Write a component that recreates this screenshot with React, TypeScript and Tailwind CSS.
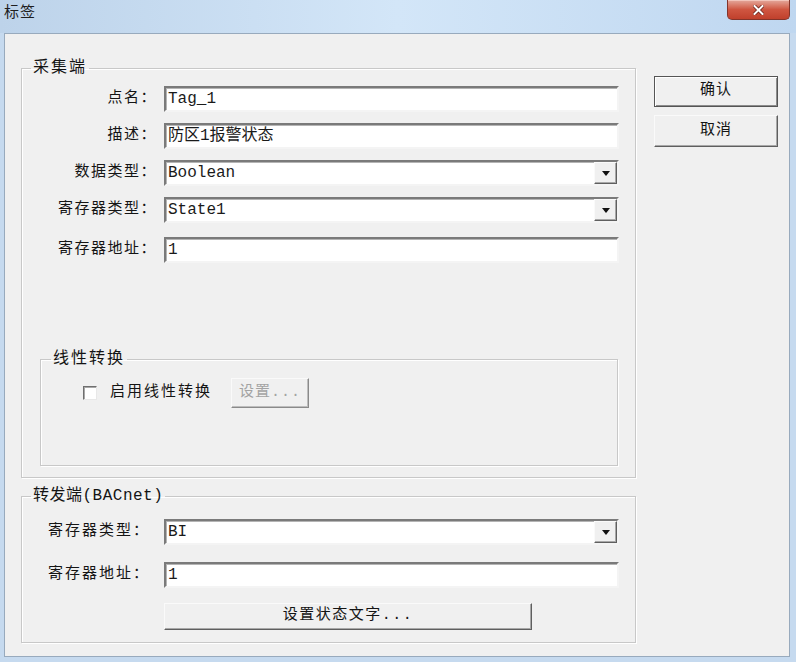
import React from 'react';

const FONT = "font-['Liberation_Mono','Noto_Sans_CJK_SC',monospace]";

// sunken edit box, classic win32 look
function Field({ value }: { value: string }) {
  return (
    <div className="w-[455px] h-[26px] flex items-center bg-white border-2 border-t-[#7a7a7a] border-l-[#7a7a7a] border-r-[#f4f4f4] border-b-[#f4f4f4] shadow-[inset_1px_1px_0_#b4b4b4]">
      <span className="pl-[2px] text-[16px] leading-none text-[#1a1a1a] whitespace-pre">{value}</span>
    </div>
  );
}

function Combo({ value }: { value: string }) {
  return (
    <div className="w-[455px] h-[26px] flex items-stretch bg-white border-2 border-t-[#7a7a7a] border-l-[#7a7a7a] border-r-[#f4f4f4] border-b-[#f4f4f4] shadow-[inset_1px_1px_0_#b4b4b4]">
      <span className="flex-1 flex items-center pl-[2px] text-[16px] leading-none text-[#1a1a1a]">{value}</span>
      <span className="w-[23px] flex items-center justify-center bg-[#f0f0f0] border border-t-[#fafafa] border-l-[#fafafa] border-r-[#5f5f5f] border-b-[#5f5f5f] shadow-[inset_-1px_-1px_0_#a8a8a8]">
        <svg width="8" height="5" viewBox="0 0 8 5">
          <path d="M0 0 L8 0 L4 5 Z" fill="#111" />
        </svg>
      </span>
    </div>
  );
}

function Row({ label, children, right = true }: { label: string; children: React.ReactNode; right?: boolean }) {
  return (
    <div className="flex items-center h-[26px]">
      <span
        className={
          right
            ? 'w-[135px] mr-[7px] text-right text-[15px] tracking-[1.5px] text-[#141414]'
            : 'w-[142px] pl-[26px] text-left text-[15px] tracking-[2px] text-[#141414]'
        }
      >
        {label}
      </span>
      {children}
    </div>
  );
}

export default function App() {
  return (
    <div className={`w-[796px] h-[662px] flex flex-col bg-[#c6daef] ${FONT}`}>
      {/* Title bar */}
      <div className="h-[33px] flex items-start justify-between bg-gradient-to-r from-[#bdd3ea] via-[#d3e6f8] to-[#bfd7f0]">
        <span className="pl-[4px] pt-[5px] text-[15px] leading-[18px] text-[#1e1e1e] tracking-[1px]">标签</span>
        <div className="mr-[6px] w-[63px] h-[20px] flex items-center justify-center rounded-b-[5px] border border-t-0 border-[#83342a] bg-gradient-to-b from-[#e3a89c] via-[#cf5641] to-[#c0402c] shadow-[inset_0_1px_0_#f2c5bb]">
          <svg width="11" height="10" viewBox="0 0 11 10">
            <path d="M1.5 1 L9.5 9 M9.5 1 L1.5 9" stroke="#6b2219" strokeWidth="3.6" strokeLinecap="square" />
            <path d="M1.5 1 L9.5 9 M9.5 1 L1.5 9" stroke="#ffffff" strokeWidth="2" strokeLinecap="square" />
          </svg>
        </div>
      </div>

      {/* Client area */}
      <div className="flex-1 ml-[4px] mr-[6px] mb-[5px] flex bg-[#f0f0f0] border border-[#98aabd] pl-[16px]">
        <div className="w-[615px] mt-[26px] flex flex-col">
          {/* 采集端 */}
          <fieldset className="border border-[#c8c8c8] shadow-[inset_1px_1px_0_#fff,1px_1px_0_#fff] px-0 pt-[10px] pb-[11px]">
            <legend className="ml-[9px] px-[2px] text-[16px] leading-[16px] tracking-[2px] text-[#141414]">采集端</legend>
            <div className="flex flex-col gap-[11px]">
              <Row label="点名：">
                <Field value="Tag_1" />
              </Row>
              <Row label="描述：">
                <Field value="防区1报警状态" />
              </Row>
              <Row label="数据类型：">
                <Combo value="Boolean" />
              </Row>
              <Row label="寄存器类型：">
                <Combo value="State1" />
              </Row>
              <div className="mt-[3px]">
                <Row label="寄存器地址：">
                  <Field value="1" />
                </Row>
              </div>
            </div>

            {/* 线性转换 */}
            <fieldset className="mt-[88px] ml-[18px] mr-[17px] border border-[#c8c8c8] shadow-[inset_1px_1px_0_#fff,1px_1px_0_#fff] px-0 pt-[11px] pb-[57px]">
              <legend className="ml-[10px] px-[2px] text-[16px] leading-[16px] tracking-[2px] text-[#141414]">线性转换</legend>
              <div className="flex items-center h-[30px] pl-[42px]">
                <span className="w-[14px] h-[14px] bg-white border border-t-[#6f6f6f] border-l-[#6f6f6f] border-r-[#e8e8e8] border-b-[#e8e8e8] shadow-[inset_1px_1px_0_#a8a8a8]" />
                <span className="ml-[13px] text-[15px] tracking-[2px] text-[#141414]">启用线性转换</span>
                <button className="ml-[19px] w-[78px] h-[30px] flex items-center justify-center bg-[#f0f0f0] border border-t-[#fafafa] border-l-[#fafafa] border-r-[#8a8a8a] border-b-[#8a8a8a] shadow-[inset_-1px_-1px_0_#bdbdbd] text-[15px] tracking-[1px] text-[#a3a3a3]">
                  设置...
                </button>
              </div>
            </fieldset>
          </fieldset>

          {/* 转发端 */}
          <fieldset className="mt-[10px] border border-[#c8c8c8] shadow-[inset_1px_1px_0_#fff,1px_1px_0_#fff] px-0 pt-[15px] pb-[12px]">
            <legend className="ml-[9px] px-[2px] text-[16px] leading-[16px] tracking-[0.5px] text-[#141414]">转发端(BACnet)</legend>
            <div className="flex flex-col gap-[17px]">
              <Row label="寄存器类型：" right={false}>
                <Combo value="BI" />
              </Row>
              <Row label="寄存器地址：" right={false}>
                <Field value="1" />
              </Row>
            </div>
            <div className="pl-[142px] mt-[15px]">
              <button className="w-[368px] h-[27px] flex items-center justify-center bg-[#f0f0f0] border border-t-[#fafafa] border-l-[#fafafa] border-r-[#5f5f5f] border-b-[#5f5f5f] shadow-[inset_-1px_-1px_0_#a8a8a8] text-[15px] tracking-[1.5px] text-[#141414]">
                设置状态文字...
              </button>
            </div>
          </fieldset>
        </div>

        {/* Right side buttons */}
        <div className="ml-[18px] mt-[42px] flex flex-col gap-[8px]">
          <button className="w-[124px] h-[31px] flex items-center justify-center bg-[#f0f0f0] border border-[#555555] shadow-[inset_1px_1px_0_#fff,inset_-1px_-1px_0_#8c8c8c] text-[15px] tracking-[1px] text-[#141414]">
            确认
          </button>
          <button className="w-[124px] h-[32px] flex items-center justify-center bg-[#f0f0f0] border border-t-[#fafafa] border-l-[#fafafa] border-r-[#5f5f5f] border-b-[#5f5f5f] shadow-[inset_-1px_-1px_0_#a8a8a8] text-[15px] tracking-[1px] text-[#141414]">
            取消
          </button>
        </div>
      </div>
    </div>
  );
}
